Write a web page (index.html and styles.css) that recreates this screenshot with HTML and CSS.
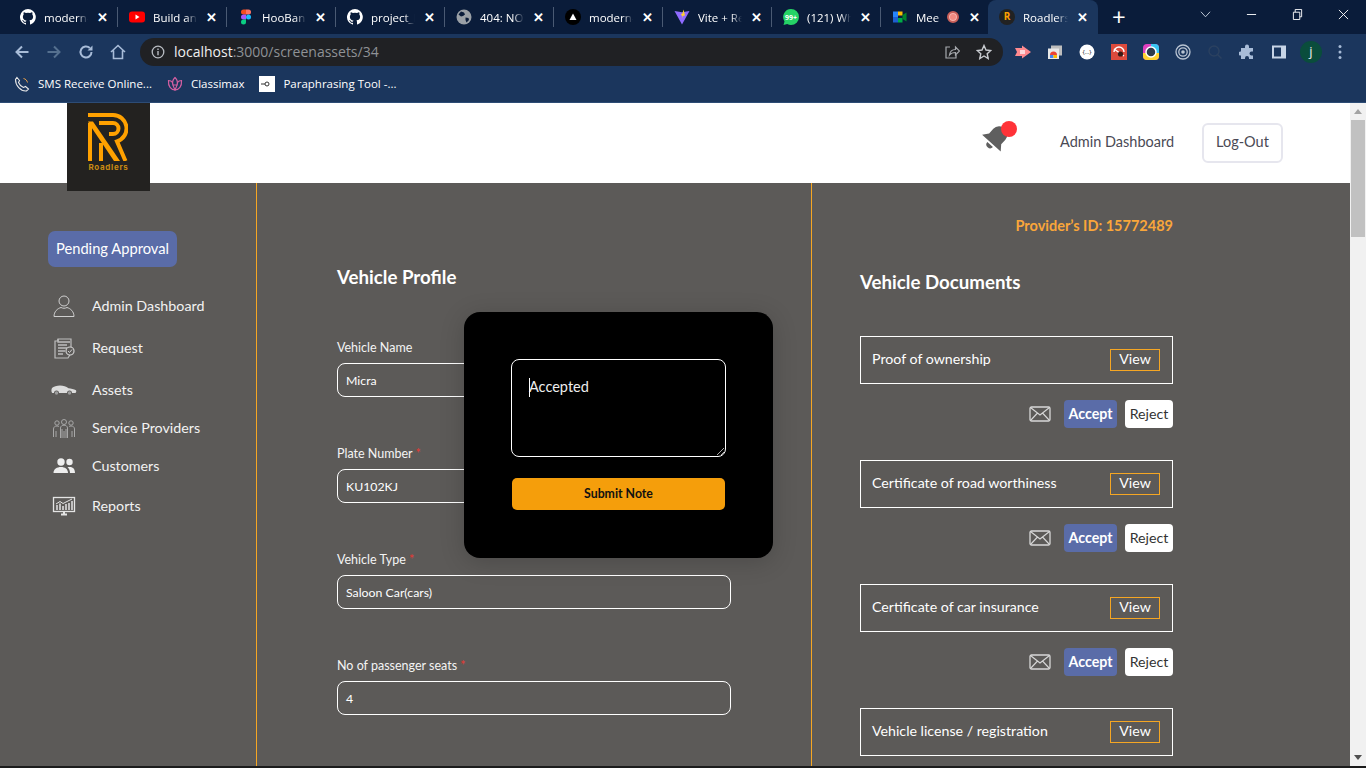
FILE: index.html
```html
<!DOCTYPE html>
<html lang="en">
<head>
  <meta charset="UTF-8">
  <meta name="viewport" content="width=device-width, initial-scale=1.0">
  <title>Roadlers</title>
  <link rel="stylesheet" href="styles.css">
</head>
<body>
  <div class="chrome">
    <div class="tabstrip">
      <div class="tab">
        <svg class="fav" viewBox="0 0 16 16"><path fill="#fff" d="M8 0a8 8 0 0 0-2.5 15.6c.4.1.5-.2.5-.4v-1.4c-2.2.5-2.7-1-2.7-1-.4-.9-.9-1.2-.9-1.2-.7-.5.1-.5.1-.5.8.1 1.2.8 1.2.8.7 1.2 1.9.9 2.3.7.1-.5.3-.9.5-1.1-1.8-.2-3.6-.9-3.6-4 0-.9.3-1.6.8-2.1-.1-.2-.4-1 .1-2.1 0 0 .7-.2 2.2.8a7.6 7.6 0 0 1 4 0c1.5-1 2.2-.8 2.2-.8.4 1.1.2 1.9.1 2.1.5.6.8 1.3.8 2.1 0 3.1-1.9 3.7-3.7 3.9.3.3.6.8.6 1.5v2.2c0 .2.1.5.6.4A8 8 0 0 0 8 0z"/></svg>
        <span class="tab-title">modern-</span><span class="tab-x">✕</span>
      </div>
      <div class="tab">
        <svg class="fav" viewBox="0 0 16 16"><rect y="2.5" width="16" height="11" rx="3" fill="#f00"/><path fill="#fff" d="M6.5 5.5v5l4-2.5z"/></svg>
        <span class="tab-title">Build and</span><span class="tab-x">✕</span>
      </div>
      <div class="tab">
        <svg class="fav" viewBox="0 0 16 16"><path fill="#f24e1e" d="M3 3a2.5 2.5 0 0 1 2.5-2.5H8v5H5.5A2.5 2.5 0 0 1 3 3z"/><path fill="#ff7262" d="M8 .5h2.5a2.5 2.5 0 0 1 0 5H8z"/><path fill="#a259ff" d="M3 8a2.5 2.5 0 0 1 2.5-2.5H8v5H5.5A2.5 2.5 0 0 1 3 8z"/><circle cx="10.5" cy="8" r="2.5" fill="#1abcfe"/><path fill="#0acf83" d="M3 13a2.5 2.5 0 0 1 2.5-2.5H8V13a2.5 2.5 0 0 1-5 0z"/></svg>
        <span class="tab-title">HooBank</span><span class="tab-x">✕</span>
      </div>
      <div class="tab">
        <svg class="fav" viewBox="0 0 16 16"><path fill="#fff" d="M8 0a8 8 0 0 0-2.5 15.6c.4.1.5-.2.5-.4v-1.4c-2.2.5-2.7-1-2.7-1-.4-.9-.9-1.2-.9-1.2-.7-.5.1-.5.1-.5.8.1 1.2.8 1.2.8.7 1.2 1.9.9 2.3.7.1-.5.3-.9.5-1.1-1.8-.2-3.6-.9-3.6-4 0-.9.3-1.6.8-2.1-.1-.2-.4-1 .1-2.1 0 0 .7-.2 2.2.8a7.6 7.6 0 0 1 4 0c1.5-1 2.2-.8 2.2-.8.4 1.1.2 1.9.1 2.1.5.6.8 1.3.8 2.1 0 3.1-1.9 3.7-3.7 3.9.3.3.6.8.6 1.5v2.2c0 .2.1.5.6.4A8 8 0 0 0 8 0z"/></svg>
        <span class="tab-title">project_l</span><span class="tab-x">✕</span>
      </div>
      <div class="tab">
        <svg class="fav" viewBox="0 0 16 16"><circle cx="8" cy="8" r="7.5" fill="#9aa0a6"/><path fill="#0a1c3a" d="M5 2.5l3 1 1 2-2 1.5-2 .5-2.5-2zM9.500 8.500l3 .5.5 2-2.500 2.500-1-2.500z"/></svg>
        <span class="tab-title">404: NOT</span><span class="tab-x">✕</span>
      </div>
      <div class="tab">
        <svg class="fav" viewBox="0 0 16 16"><circle cx="8" cy="8" r="8" fill="#000"/><path fill="#fff" d="M8 4.5l3.5 6.5h-7z"/></svg>
        <span class="tab-title">modern-</span><span class="tab-x">✕</span>
      </div>
      <div class="tab">
        <svg class="fav" viewBox="0 0 16 16"><path fill="#8f6bff" d="M.5 2L8 3.3 15.5 2 8 15.5z"/><path fill="#ffd02e" d="M9.5.5L11 6.5 8.5 7l.5 2.5-2-4.500 1.300-.3z"/></svg>
        <span class="tab-title">Vite + Re</span><span class="tab-x">✕</span>
      </div>
      <div class="tab">
        <svg class="fav" viewBox="0 0 16 16"><path fill="#25d366" d="M8 0a8 8 0 0 1 0 16 8 8 0 0 1-3.8-1L.5 16l1-3.6A8 8 0 0 1 8 0z"/><text x="8" y="10.5" class="wa-count">99+</text></svg>
        <span class="tab-title">(121) Wh</span><span class="tab-x">✕</span>
      </div>
      <div class="tab tab-meet">
        <svg class="fav" viewBox="0 0 16 16"><rect x="1" y="2.5" width="5" height="5.5" fill="#2684fc"/><rect x="6" y="2.5" width="4.5" height="4" fill="#fbbc04"/><rect x="1" y="8" width="5" height="5.5" fill="#1e5fd0"/><rect x="6" y="9" width="4.5" height="4.5" fill="#00ac47"/><path fill="#00832d" d="M10.5 6l4-2.5v9l-4-2.500z"/></svg>
        <span class="tab-title">Mee</span>
        <span class="rec-dot"></span>
        <span class="tab-x">✕</span>
      </div>
      <div class="tab tab-active">
        <svg class="fav" viewBox="0 0 16 16"><circle cx="8" cy="8" r="8" fill="#222"/><text x="8" y="11" class="rl-mini">R</text></svg>
        <span class="tab-title">Roadlers</span><span class="tab-x">✕</span>
      </div>
      <div class="tab-new">+</div>
      <div class="win-btns">
        <svg viewBox="0 0 12 8" class="win-ico"><path d="M1 1l5 5.5L11 1" fill="none" stroke="#c9d3e0" stroke-width="1"/></svg>
        <svg viewBox="0 0 12 12" class="win-ico"><path d="M1 6h10" stroke="#fff" stroke-width="1"/></svg>
        <svg viewBox="0 0 12 12" class="win-ico"><path d="M1.5 3.5h7v8h-7zM3.5 3.5v-3h7v8h-2" fill="none" stroke="#fff" stroke-width="1"/></svg>
        <svg viewBox="0 0 12 12" class="win-ico"><path d="M1 1l10 10M11 1L1 11" stroke="#fff" stroke-width="1"/></svg>
      </div>
    </div>
    <div class="toolbar">
      <svg class="nav-ico" viewBox="0 0 16 16"><path d="M14.5 8H2.5M8 2.5L2.5 8 8 13.5" fill="none" stroke="#a8bcd8" stroke-width="2"/></svg>
      <svg class="nav-ico" viewBox="0 0 16 16"><path d="M1.5 8h12M8 2.5L13.5 8 8 13.5" fill="none" stroke="#55708f" stroke-width="2"/></svg>
      <svg class="nav-ico" viewBox="0 0 16 16"><path d="M13.5 8A5.5 5.5 0 1 1 11.8 4" fill="none" stroke="#a8bcd8" stroke-width="2"/><path fill="#a8bcd8" d="M14.5 1.5v5h-5z"/></svg>
      <svg class="nav-ico" viewBox="0 0 16 16"><path d="M1 8l7-6.5L15 8M3.5 6.5V14.5h9V6.5" fill="none" stroke="#a8bcd8" stroke-width="1.6"/></svg>
      <div class="omnibox">
        <svg class="info-ico" viewBox="0 0 14 14"><circle cx="7" cy="7" r="5.8" fill="none" stroke="#b8bcc2" stroke-width="1.3"/><path d="M7 6v4.2M7 3.6v1.3" stroke="#b8bcc2" stroke-width="1.4"/></svg>
        <span class="url"><span class="url-host">localhost</span>:3000/screenassets/34</span>
        <svg class="omni-ico" viewBox="0 0 16 16"><path d="M6 3H2v11h10v-3" fill="none" stroke="#a6a9ae" stroke-width="1.2"/><path d="M5.5 11c.5-4 3.5-5.5 6-5.5V3l4 4-4 4V8.5c-2.5 0-4.5.5-6 2.5z" fill="none" stroke="#a6a9ae" stroke-width="1.2"/></svg>
        <svg class="omni-ico" viewBox="0 0 16 16"><path d="M8 1.5l2 4.5 4.8.5-3.6 3.2 1 4.8L8 12l-4.2 2.5 1-4.8L1.2 6.5 6 6z" fill="none" stroke="#c8cbd0" stroke-width="1.4"/></svg>
      </div>
      <div class="ext-row">
        <svg class="ext" viewBox="0 0 16 16"><path fill="#ff8a8f" d="M0 4h7V1.5L16 8l-9 6.5V12H0l2-4z"/><path fill="#ffd7d9" d="M5 6h5v4H5z"/></svg>
        <svg class="ext" viewBox="0 0 16 16"><rect x="4" y="1.5" width="11" height="10" fill="#bdbdbd"/><rect x="1" y="4.5" width="11" height="10.5" fill="#e8e8e8"/><path fill="#ea4335" d="M3 11a3.5 3.5 0 0 1 7 0z"/><path fill="#4285f4" d="M3 11h3.5v3H3z"/><path fill="#fbbc04" d="M6.5 11H10v3H6.5z"/></svg>
        <svg class="ext" viewBox="0 0 16 16"><circle cx="8" cy="8" r="7.5" fill="#fff"/><text x="8" y="10" class="ext-text">{...}</text></svg>
        <svg class="ext" viewBox="0 0 16 16"><rect width="16" height="16" fill="#dd4a3c"/><path d="M8 3a5 5 0 0 1 5 5M3 8a5 5 0 0 1 5-5M3 5l10 7" fill="none" stroke="#fff" stroke-width="1.4"/><circle cx="9.5" cy="10" r="2.6" fill="#3a1a16"/></svg>
        <svg class="ext" viewBox="0 0 16 16"><rect width="16" height="16" rx="4" fill="#e040c0"/><path fill="#38c6f4" d="M8 0h4a4 4 0 0 1 4 4v8H8z"/><path fill="#ffd22e" d="M0 9h16v3a4 4 0 0 1-4 4H4a4 4 0 0 1-4-4z"/><circle cx="8" cy="8" r="5" fill="#2c3a4c" stroke="#fff" stroke-width="1.5"/></svg>
        <svg class="ext" viewBox="0 0 16 16"><circle cx="8" cy="8" r="7" fill="none" stroke="#b9c4d3" stroke-width="1.3"/><circle cx="8" cy="8" r="4.2" fill="none" stroke="#b9c4d3" stroke-width="1.3"/><circle cx="8" cy="8" r="1.8" fill="#b9c4d3"/></svg>
        <svg class="ext" viewBox="0 0 16 16"><circle cx="7" cy="7" r="5" fill="none" stroke="#2b4160" stroke-width="1.4"/><path d="M10.5 10.5l4 4" stroke="#2b4160" stroke-width="1.4"/></svg>
        <svg class="ext" viewBox="0 0 16 16"><path fill="#a8bcd8" d="M6 2.5a2 2 0 0 1 4 0V4h4v3.5h-1.5a2 2 0 0 0 0 4H14V15H10v-1a2 2 0 0 0-4 0v1H2v-3.5h-.5a2 2 0 0 1 0-4H2V4h4z"/></svg>
        <svg class="ext" viewBox="0 0 16 16"><path d="M2 2.5h12v11H2z" fill="none" stroke="#c7d4e6" stroke-width="2"/><path fill="#c7d4e6" d="M10 2.5h4v11h-4z"/></svg>
        <span class="avatar">j</span>
        <svg class="ext ext-menu" viewBox="0 0 4 16"><circle cx="2" cy="2.5" r="1.5" fill="#a8bcd8"/><circle cx="2" cy="8" r="1.5" fill="#a8bcd8"/><circle cx="2" cy="13.5" r="1.5" fill="#a8bcd8"/></svg>
      </div>
    </div>
    <div class="bookmarks">
      <div class="bm">
        <svg class="bm-ico" viewBox="0 0 16 16"><path d="M3 1.5l2.5 3L4.500 6.500c1 2.500 2.500 4 5 5l2-1 3 2.500-2 2c-6 .5-11-5.500-11-11.500z" fill="none" stroke="#e8e8e8" stroke-width="1.1"/><path d="M9.5 2.5c2 .4 3.5 1.8 4 4" fill="none" stroke="#e8a14a" stroke-width="1"/></svg>
        SMS Receive Online...
      </div>
      <div class="bm">
        <svg class="bm-ico" viewBox="0 0 16 16"><path d="M8 1.5c2.2 2 2.8 4.5 2.2 7.5H5.8C5.2 6 5.800 3.500 8 1.500zM1.500 4.500c1.800 0 3.200.7 4 2 .2 2 .7 4 2.500 7.500-4-.3-7-3.500-6.500-9.500zM14.500 4.500c-1.800 0-3.200.7-4 2-.2 2-.7 4-2.500 7.500 4-.3 7-3.500 6.500-9.500z" fill="none" stroke="#d45fa2" stroke-width="1.2"/></svg>
        Classimax
      </div>
      <div class="bm">
        <svg class="bm-ico" viewBox="0 0 16 16"><rect width="16" height="16" fill="#fff"/><circle cx="8" cy="8" r="2" fill="none" stroke="#333" stroke-width="1"/><path d="M2 8h4" stroke="#333" stroke-width="1"/></svg>
        Paraphrasing Tool -...
      </div>
    </div>
  </div>

  <div class="viewport">
    <div class="page">
      <header class="topbar">
        <div class="logo">
          <svg class="logo-mark" viewBox="0 0 40 48">
            <g fill="none" stroke="#ffa100" stroke-width="4">
              <path d="M0 2H25A13.5 13.5 0 0 1 29 28.4L37.5 48"/>
              <path d="M11 10H25A5.5 5.5 0 0 1 25 21H21"/>
              <path d="M2 10V48M13 30V48"/>
            </g>
            <path fill="#ffa100" d="M0 8.5H5L32 48H26L3.500 14.5z"/>
          </svg>
          <span class="logo-text">Roadlers</span>
        </div>
        <div class="top-right">
          <div class="bell-wrap">
            <svg class="bell" viewBox="0 0 24 24"><path fill="#5f5f5f" d="M12 1.5A6.5 6.5 0 0 0 5.5 8v5L2 17.500h20L18.500 13V8A6.500 6.500 0 0 0 12 1.500zM9 19a3 3 0 0 0 6 0z" transform="rotate(42 12 12)"/></svg>
            <span class="bell-dot"></span>
          </div>
          <a class="top-link">Admin Dashboard</a>
          <button class="logout">Log-Out</button>
        </div>
      </header>

      <div class="layout">
        <aside class="sidebar">
          <div class="status-pill">Pending Approval</div>
          <nav class="side-nav">
            <a class="side-item side-admin">
              <svg class="side-ico" viewBox="0 0 24 24"><circle cx="12" cy="7" r="5" fill="none" stroke="#cfcfcf" stroke-width="1"/><path d="M2 22.5c0-5 3.5-8 7-9 2 1 4 1 6 0 3.5 1 7 4 7 9z" fill="none" stroke="#cfcfcf" stroke-width="1"/></svg>
              Admin Dashboard
            </a>
            <a class="side-item side-request">
              <svg class="side-ico" viewBox="0 0 24 24"><path d="M6 3h13v14l-3 5H3V5h3z" fill="none" stroke="#bdbdbd" stroke-width="1.2"/><path d="M6 3v3h12M6 9h9M6 12h9M6 15h7M6 18h5" stroke="#bdbdbd" stroke-width="1.3" fill="none"/><circle cx="18" cy="15" r="4" fill="#5c5a58" stroke="#cfcfcf" stroke-width="1.2"/><path d="M16 15l1.5 1.5 2.5-3" stroke="#cfcfcf" fill="none"/></svg>
              Request
            </a>
            <a class="side-item side-assets">
              <svg class="side-ico" viewBox="0 0 26 12"><path fill="#dcdcdc" d="M1 5c1.5-1.5 5-2.5 8-2.5 3.5 0 6 .8 8.500 2.800 2.500.3 5.500.8 7.500 2 .5 1 .3 2-.5 2.700H21a2.500 2.500 0 0 0-5 0H8a2.500 2.500 0 0 0-5 0H1.200C.2 9 .2 6.500 1 5z"/><circle cx="5.5" cy="10" r="1.7" fill="#9d9d9d"/><circle cx="18.5" cy="10" r="1.7" fill="#9d9d9d"/></svg>
              Assets
            </a>
            <a class="side-item side-service">
              <svg class="side-ico" viewBox="0 0 24 24"><g fill="none" stroke="#a7a7a7" stroke-width="1"><circle cx="12" cy="6" r="2.5"/><circle cx="5" cy="7" r="2.2"/><circle cx="19" cy="7" r="2.2"/><path d="M8.5 22V12c0-2 2-2.800 3.500-2.800s3.500.8 3.500 2.800v10M12 15v7M10 13v9M14 13v9"/><path d="M1.500 21v-8c0-2 1.500-3 3.500-3 1 0 1.500.3 2 .6M22.500 21v-8c0-2-1.500-3-3.500-3-1 0-1.500.3-2 .6M4 15v6M20 15v6"/></g></svg>
              Service Providers
            </a>
            <a class="side-item side-customers">
              <svg class="side-ico" viewBox="0 0 24 24"><circle cx="9" cy="8" r="3.7" fill="#eee"/><circle cx="17.5" cy="8" r="3.2" fill="#eee"/><path fill="#eee" d="M1.5 19c0-4 3.500-6 7.500-6s7 2 7 6zM17.500 13c3 0 5.500 1.500 5.500 6h-5c0-2.500-1-4.500-2.500-5.700.6-.2 1.300-.3 2-.3z"/></svg>
              Customers
            </a>
            <a class="side-item side-reports">
              <svg class="side-ico" viewBox="0 0 24 24"><rect x="1.5" y="3.5" width="21" height="14" fill="none" stroke="#e4e4e4" stroke-width="1.3"/><path d="M9 20.5h6M12 18v2.5" stroke="#e4e4e4" stroke-width="2"/><path d="M5 16v-5M8 16v-6.5M11 16v-4M14 16v-6M17 16v-7M20 16V7" stroke="#e4e4e4" stroke-width="1.5"/><path d="M4 10l4-2.5 3 2 4-2 5-2.5" stroke="#e4e4e4" fill="none"/></svg>
              Reports
            </a>
          </nav>
        </aside>

        <main class="profile">
          <h2 class="section-title">Vehicle Profile</h2>
          <div class="field field-first">
            <label class="field-label">Vehicle Name</label>
            <div class="field-box">Micra</div>
          </div>
          <div class="field">
            <label class="field-label">Plate Number <span class="req">*</span></label>
            <div class="field-box">KU102KJ</div>
          </div>
          <div class="field">
            <label class="field-label">Vehicle Type <span class="req">*</span></label>
            <div class="field-box">Saloon Car(cars)</div>
          </div>
          <div class="field">
            <label class="field-label">No of passenger seats <span class="req">*</span></label>
            <div class="field-box">4</div>
          </div>
        </main>

        <section class="documents">
          <div class="provider-id">Provider’s ID: 15772489</div>
          <h2 class="section-title docs-title">Vehicle Documents</h2>

          <div class="doc-box"><span class="doc-name">Proof of ownership</span><a class="view-btn">View</a></div>
          <div class="doc-actions">
            <svg class="mail-ico" viewBox="0 0 22 16"><rect x="1" y="1" width="20" height="14" rx="1.5" fill="none" stroke="#d8d8d8" stroke-width="1.3"/><path d="M1.5 1.5L11 9l9.5-7.5M1.5 14.5l7-7.5M20.5 14.5l-7-7.5" fill="none" stroke="#d8d8d8" stroke-width="1.1"/></svg>
            <button class="btn-accept">Accept</button>
            <button class="btn-reject">Reject</button>
          </div>

          <div class="doc-box"><span class="doc-name">Certificate of road worthiness</span><a class="view-btn">View</a></div>
          <div class="doc-actions">
            <svg class="mail-ico" viewBox="0 0 22 16"><rect x="1" y="1" width="20" height="14" rx="1.5" fill="none" stroke="#d8d8d8" stroke-width="1.3"/><path d="M1.5 1.5L11 9l9.5-7.5M1.5 14.5l7-7.5M20.5 14.5l-7-7.5" fill="none" stroke="#d8d8d8" stroke-width="1.1"/></svg>
            <button class="btn-accept">Accept</button>
            <button class="btn-reject">Reject</button>
          </div>

          <div class="doc-box"><span class="doc-name">Certificate of car insurance</span><a class="view-btn">View</a></div>
          <div class="doc-actions">
            <svg class="mail-ico" viewBox="0 0 22 16"><rect x="1" y="1" width="20" height="14" rx="1.5" fill="none" stroke="#d8d8d8" stroke-width="1.3"/><path d="M1.5 1.5L11 9l9.5-7.5M1.5 14.5l7-7.5M20.5 14.5l-7-7.5" fill="none" stroke="#d8d8d8" stroke-width="1.1"/></svg>
            <button class="btn-accept">Accept</button>
            <button class="btn-reject">Reject</button>
          </div>

          <div class="doc-box"><span class="doc-name">Vehicle license / registration</span><a class="view-btn">View</a></div>
        </section>
      </div>

      <!-- note popup sits over the form -->
      <div class="note-modal">
        <div class="note-text"><span class="caret"></span>Accepted
          <svg class="grip" viewBox="0 0 8 8"><path d="M8 1L1 8M8 5L5 8" stroke="#aaa" stroke-width="1"/></svg>
        </div>
        <button class="note-submit">Submit Note</button>
      </div>
    </div>

    <div class="scrollbar">
      <svg class="scroll-arrow" viewBox="0 0 8 5"><path fill="#a3a3a3" d="M4 0l4 5H0z"/></svg>
      <div class="scroll-thumb"></div>
      <svg class="scroll-arrow scroll-arrow-down" viewBox="0 0 8 5"><path fill="#505050" d="M0 0h8L4 5z"/></svg>
    </div>
  </div>
  <div class="taskbar-edge"></div>
</body>
</html>
```

FILE: styles.css
```css
/* Browser frame */
* {
  box-sizing: border-box;
}
html, body {
  margin: 0;
  height: 768px;
  overflow: hidden;
}
body {
  font-family: "Lato", "Noto Sans", sans-serif;
  background: #5c5a58;
}
.chrome {
  height: 103px;
  background: #1b365d;
  border-bottom: 1px solid #2d4c75;
  font-family: "Open Sans", "Liberation Sans", sans-serif;
}
.tabstrip {
  height: 34px;
  background: #0a1c3a;
  display: flex;
  align-items: center;
  padding-left: 9px;
  color: #fff;
}
.tab {
  width: 109px;
  height: 34px;
  display: flex;
  align-items: center;
  padding: 0 9px 0 11px;
  font-size: 11.5px;
  flex: none;
  position: relative;
}
.tab::after {
  content: "";
  position: absolute;
  right: 0;
  top: 7px;
  height: 20px;
  width: 1px;
  background: #4a5a73;
}
.tab-meet::after, .tab-active::after {
  background: none;
}
.tab-active {
  background: #1b365d;
  border-radius: 8px 8px 0 0;
  width: 110px;
  margin-left: -2px;
}
.fav {
  width: 16px;
  height: 16px;
  flex: none;
  margin-right: 8px;
}
.tab-title {
  flex: 1;
  margin-right: 8px;
  overflow: hidden;
  white-space: nowrap;
  -webkit-mask-image: linear-gradient(to right, #000 75%, transparent);
  mask-image: linear-gradient(to right, #000 75%, transparent);
}
.tab-meet .tab-title {
  margin-right: 4px;
}
.tab-x {
  font-size: 13px;
  width: 12px;
  margin-right: 1px;
  text-align: center;
  font-weight: bold;
  flex: none;
}
.rec-dot {
  width: 12px;
  height: 12px;
  border-radius: 50%;
  background: #f28b82;
  border: 2px solid #c9605a;
  box-shadow: inset 0 0 0 1px #f7b6b0;
  margin-right: 9px;
  flex: none;
}
.wa-count {
  font-size: 7px;
  font-weight: bold;
  fill: #fff;
  text-anchor: middle;
}
.rl-mini {
  font-size: 10px;
  font-weight: bold;
  fill: #ffa100;
  text-anchor: middle;
}
.tab-new {
  font-size: 24px;
  line-height: 34px;
  margin-left: 14px;
  font-weight: 400;
}
.win-btns {
  margin-left: auto;
  display: flex;
  align-items: center;
  gap: 35px;
  padding: 0 17px 6px 0;
  height: 34px;
}
.win-ico {
  width: 11px;
  height: 11px;
  flex: none;
}
.toolbar {
  height: 35px;
  display: flex;
  align-items: center;
  padding-left: 14px;
}
.nav-ico {
  width: 16px;
  height: 16px;
  margin-right: 16px;
  flex: none;
}
.omnibox {
  width: 863px;
  height: 28px;
  background: #202124;
  border-radius: 14px;
  display: flex;
  align-items: center;
  padding: 0 11px 0 11px;
  margin-left: -2px;
}
.info-ico {
  width: 14px;
  height: 14px;
  margin-right: 9px;
}
.url {
  flex: 1;
  font-size: 14px;
  color: #8f9296;
}
.url-host {
  color: #f0f0f0;
}
.omni-ico {
  width: 16px;
  height: 16px;
  margin-left: 16px;
}
.ext-row {
  display: flex;
  align-items: center;
  margin-left: 12px;
  gap: 16px;
}
.ext {
  width: 16px;
  height: 16px;
  flex: none;
}
.ext-menu {
  width: 4px;
  margin-left: 3px;
}
.ext-text {
  font-size: 6px;
  fill: #222;
  text-anchor: middle;
}
.avatar {
  width: 22px;
  height: 22px;
  margin: 0 -3px;
  border-radius: 50%;
  background: #0a4d3c;
  color: #eee;
  font-size: 13px;
  text-align: center;
  line-height: 21px;
  flex: none;
}
.bookmarks {
  height: 33px;
  display: flex;
  align-items: center;
  padding: 0 0 4px 14px;
  color: #fff;
  font-size: 11.5px;
}
.bm {
  display: flex;
  align-items: center;
  margin-right: 15px;
}
.bm-ico {
  width: 16px;
  height: 16px;
  margin-right: 8px;
}

/* Page */
.viewport {
  height: 663px;
  display: flex;
}
.taskbar-edge {
  height: 2px;
  background: #1c1c1c;
}
.page {
  width: 1350px;
  height: 663px;
  position: relative;
  overflow: hidden;
  background: #5c5a58;
  color: #fff;
}
.scrollbar {
  width: 16px;
  background: #f1f1f1;
  display: flex;
  flex-direction: column;
  align-items: center;
}
.scroll-arrow {
  width: 8px;
  height: 5px;
  margin: 6px 0;
  flex: none;
}
.scroll-arrow-down {
  margin-top: auto;
}
.scroll-thumb {
  width: 14px;
  height: 117px;
  background: #c1c1c1;
}
.topbar {
  height: 80px;
  background: #fff;
  display: flex;
  justify-content: space-between;
  padding-left: 67px;
}
.logo {
  width: 83px;
  height: 88px;
  background: #232220;
  display: flex;
  flex-direction: column;
  align-items: center;
  padding-top: 10px;
  position: relative;
  z-index: 2;
  flex: none;
}
.logo-mark {
  width: 40px;
  height: 48px;
  margin-left: -1px;
}
.logo-text {
  font-family: "Inter", sans-serif;
  font-size: 8px;
  font-weight: 700;
  letter-spacing: .7px;
  color: #c98a12;
  margin-top: 2px;
  line-height: 9px;
}
.top-right {
  display: flex;
  align-items: center;
  padding-right: 67px;
}
.bell-wrap {
  position: relative;
  width: 36px;
  height: 32px;
  margin-right: 43px;
}
.bell {
  width: 30px;
  height: 30px;
  position: absolute;
  left: 0;
  top: -4px;
}
.bell-dot {
  position: absolute;
  left: 20px;
  top: -6px;
  width: 16px;
  height: 16px;
  border-radius: 50%;
  background: #ff3338;
}
.top-link {
  width: 114px;
  font-size: 14.5px;
  white-space: nowrap;
  color: #4a4a55;
  margin: 0 28px 3px 0;
}
.logout {
  width: 81px;
  height: 40px;
  padding: 0 0 3px;
  background: #fff;
  border: 2px solid #e6e6ee;
  border-radius: 6px;
  font: inherit;
  font-size: 14.5px;
  color: #4a4a55;
}
.layout {
  display: grid;
  grid-template-columns: 257px 555px 1fr;
  height: 585px;
}
.sidebar {
  border-right: 1px solid #f5a623;
  padding: 48px 0 0 48px;
}
.status-pill {
  width: 129px;
  height: 36px;
  background: #5a6ca8;
  border-radius: 7px;
  font-size: 14.7px;
  line-height: 34px;
  text-align: center;
}
.side-nav {
  display: flex;
  flex-direction: column;
  margin-top: 25px;
  font-size: 14.3px;
}
.side-item {
  display: flex;
  align-items: center;
  height: 26px;
  color: #f2f2f2;
  position: relative;
  padding-left: 44px;
}
.side-request, .side-assets {
  margin-top: 16px;
}
.side-service, .side-customers {
  margin-top: 12px;
}
.side-reports {
  margin-top: 14px;
}
.side-ico {
  width: 24px;
  height: 24px;
  position: absolute;
  left: 4px;
  top: 2px;
}
.side-assets .side-ico {
  width: 26px;
  height: 12px;
  left: 3px;
  top: 7px;
}
.profile {
  border-right: 1px solid #f5a623;
  padding: 83px 80px 0 80px;
}
.section-title {
  margin: 0;
  font-size: 18.7px;
  font-weight: 700;
  line-height: 22px;
}
.field {
  margin-top: 49px;
}
.field-first {
  margin-top: 52px;
}
.field-label {
  display: block;
  font-size: 12.5px;
  line-height: 16px;
  color: #f4f4f4;
}
.field-box {
  height: 34px;
  border: 1px solid #fff;
  border-radius: 8px;
  font-size: 12.3px;
  line-height: 34px;
  padding-left: 8px;
  margin-top: 7px;
}
.req {
  color: #e53935;
}
.documents {
  padding: 33px 0 0 48px;
}
.provider-id {
  width: 313px;
  text-align: right;
  color: #f9a63a;
  font-size: 14.5px;
  font-weight: 700;
  line-height: 20px;
}
.docs-title {
  margin-top: 35px;
}
.doc-box {
  width: 313px;
  height: 48px;
  border: 1px solid #fff;
  display: flex;
  justify-content: space-between;
  align-items: center;
  padding: 0 12px 0 11px;
  font-size: 14.2px;
}
.doc-name {
  margin-bottom: 3px;
}
.docs-title + .doc-box {
  margin-top: 43px;
}
.view-btn {
  width: 50px;
  height: 22px;
  border: 1px solid #f5a623;
  text-align: center;
  line-height: 18px;
}
.doc-actions {
  width: 313px;
  height: 76px;
  padding-top: 16px;
  display: flex;
  justify-content: flex-end;
  align-items: flex-start;
}
.mail-ico {
  width: 22px;
  height: 16px;
  margin: 6px 13px 0 0;
}
.btn-accept, .btn-reject {
  height: 28px;
  border: 0;
  border-radius: 4px;
  font: inherit;
  font-size: 14.2px;
  padding: 0 0 2px;
}
.btn-accept {
  width: 53px;
  background: #5a6ca8;
  color: #fff;
  font-weight: 700;
  margin-right: 8px;
}
.btn-reject {
  width: 48px;
  background: #fff;
  color: #333;
}

/* Note popup */
.note-modal {
  position: absolute;
  left: 464px;
  top: 209px;
  width: 309px;
  height: 246px;
  background: #000;
  border-radius: 16px;
  box-shadow: 0 4px 24px rgba(0, 0, 0, .18);
  padding: 47px 47px 0 47px;
}
.note-text {
  position: relative;
  height: 98px;
  border: 1px solid #fff;
  border-radius: 8px;
  padding: 17px 17px;
  font-size: 14.5px;
  line-height: 20px;
  color: #eee;
}
.caret {
  position: absolute;
  left: 17px;
  top: 18px;
  width: 1px;
  height: 19px;
  background: #fff;
}
.grip {
  position: absolute;
  right: 1px;
  bottom: 1px;
  width: 8px;
  height: 8px;
}
.note-submit {
  display: block;
  width: 213px;
  height: 32px;
  margin: 21px 0 0 1px;
  padding: 0 0 2px;
  background: #f59e0b;
  border: 0;
  border-radius: 5px;
  font: inherit;
  font-size: 12.3px;
  font-weight: 700;
  color: #111;
}
```
